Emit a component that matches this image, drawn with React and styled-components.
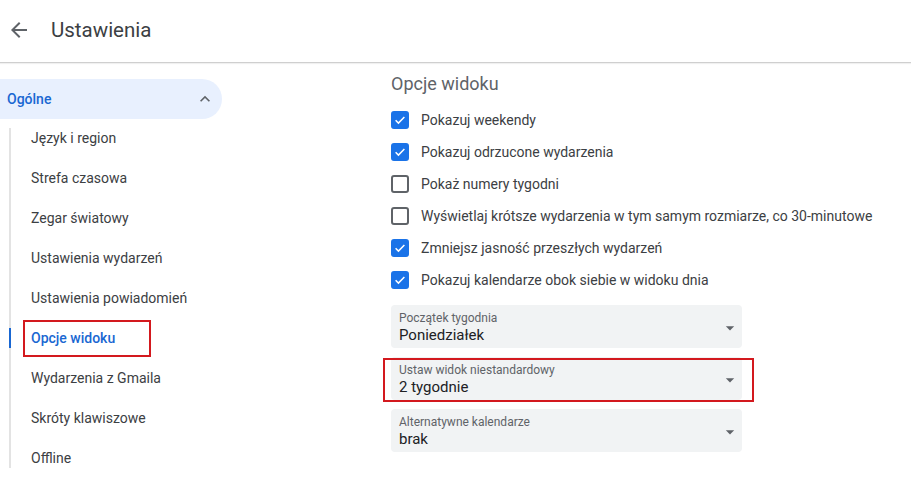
import React from "react";
import styled, { createGlobalStyle } from "styled-components";

const GlobalStyle = createGlobalStyle`
  body {
    margin: 0;
    background: #fff;
    font-family: Roboto, "Liberation Sans", Arial, sans-serif;
    color: #3c4043;
  }
`;

const navItems = [
  "Język i region",
  "Strefa czasowa",
  "Zegar światowy",
  "Ustawienia wydarzeń",
  "Ustawienia powiadomień",
  "Opcje widoku",
  "Wydarzenia z Gmaila",
  "Skróty klawiszowe",
  "Offline",
];

const options = [
  { label: "Pokazuj weekendy", checked: true },
  { label: "Pokazuj odrzucone wydarzenia", checked: true },
  { label: "Pokaż numery tygodni", checked: false },
  {
    label: "Wyświetlaj krótsze wydarzenia w tym samym rozmiarze, co 30-minutowe",
    checked: false,
  },
  { label: "Zmniejsz jasność przeszłych wydarzeń", checked: true },
  { label: "Pokazuj kalendarze obok siebie w widoku dnia", checked: true },
];

const selects = [
  { label: "Początek tygodnia", value: "Poniedziałek" },
  { label: "Ustaw widok niestandardowy", value: "2 tygodnie", marked: true },
  { label: "Alternatywne kalendarze", value: "brak" },
];

function App() {
  return (
    <>
      <GlobalStyle />
      <Page>
        <Header>
          <IconButton aria-label="Wstecz">
            <svg width="24" height="24" viewBox="0 0 24 24">
              <path
                fill="#5f6368"
                d="M20 11H7.83l5.59-5.59L12 4l-8 8 8 8 1.41-1.41L7.83 13H20v-2z"
              />
            </svg>
          </IconButton>
          <Title>Ustawienia</Title>
        </Header>
        <Body>
          <Sidebar>
            <SectionPill>
              <span>Ogólne</span>
              <svg width="20" height="20" viewBox="0 0 24 24">
                <path
                  fill="#5f6368"
                  d="M7.41 15.41L12 10.83l4.59 4.58L18 14l-6-6-6 6z"
                />
              </svg>
            </SectionPill>
            <NavList>
              {navItems.map((item) => {
                const active = item === "Opcje widoku";
                return (
                  <NavItem key={item} $active={active}>
                    <NavLabel $marked={active}>{item}</NavLabel>
                  </NavItem>
                );
              })}
            </NavList>
          </Sidebar>
          <Content>
            <Heading>Opcje widoku</Heading>
            <OptionList>
              {options.map((opt) => (
                <OptionRow key={opt.label}>
                  <Checkbox $checked={opt.checked}>
                    {opt.checked && (
                      <svg width="14" height="14" viewBox="0 0 24 24">
                        <path
                          fill="none"
                          stroke="#fff"
                          strokeWidth="2.6"
                          d="M4.5 12.5l4.8 4.8L19.5 7"
                        />
                      </svg>
                    )}
                  </Checkbox>
                  <OptionLabel>{opt.label}</OptionLabel>
                </OptionRow>
              ))}
            </OptionList>
            <SelectList>
              {selects.map((s) => (
                <SelectWrap key={s.label} $marked={s.marked}>
                  <SelectBox>
                    <SelectText>
                      <SelectLabel>{s.label}</SelectLabel>
                      <SelectValue>{s.value}</SelectValue>
                    </SelectText>
                    <svg width="20" height="20" viewBox="0 0 24 24">
                      <path fill="#5f6368" d="M7 10l5 5 5-5z" />
                    </svg>
                  </SelectBox>
                </SelectWrap>
              ))}
            </SelectList>
          </Content>
        </Body>
      </Page>
    </>
  );
}

const Page = styled.div`
  width: 911px;
  height: 481px;
  overflow: hidden;
`;

const Header = styled.header`
  height: 62px;
  display: flex;
  align-items: center;
  gap: 20px;
  padding-left: 7px;
  border-bottom: 1px solid #cfcfcf;
  box-shadow: 0 1px 1px rgba(0, 0, 0, 0.06);
`;

const IconButton = styled.div`
  width: 24px;
  height: 24px;
  display: flex;
  margin-top: -2px;
`;

const Title = styled.h1`
  margin: 0;
  margin-top: -2px;
  font-size: 20.5px;
  font-weight: 400;
  color: #3c4043;
`;

const Body = styled.div`
  display: grid;
  grid-template-columns: 391px 1fr;
`;

const Sidebar = styled.nav`
  padding-top: 16px;
`;

const SectionPill = styled.div`
  width: 222px;
  height: 40px;
  box-sizing: border-box;
  display: flex;
  align-items: center;
  justify-content: space-between;
  padding: 0 7px 0 7px;
  border-radius: 0 20px 20px 0;
  background: #e8f0fe;
  color: #1967d2;
  font-size: 14px;
  font-weight: 500;
`;

const NavList = styled.div`
  position: relative;
  margin-left: 9px;
  margin-top: -1px;

  &::before {
    content: "";
    position: absolute;
    left: 0;
    top: 10px;
    bottom: 10px;
    width: 2px;
    background: #e3e3e3;
  }
`;

const NavItem = styled.div`
  position: relative;
  height: 40px;
  display: flex;
  align-items: center;
  padding-left: 22px;
  font-size: 14px;
  color: ${(p) => (p.$active ? "#1967d2" : "#3c4043")};
  font-weight: ${(p) => (p.$active ? 500 : 400)};

  &::before {
    content: "";
    display: ${(p) => (p.$active ? "block" : "none")};
    position: absolute;
    left: 0;
    top: 10px;
    width: 2px;
    height: 20px;
    background: #1967d2;
  }
`;

const NavLabel = styled.span`
  ${(p) =>
    p.$marked &&
    `
    margin-left: -8px;
    margin-top: 1px;
    padding: 0 34px 0 6px;
    line-height: 33px;
    border: 2px solid #d3191e;
  `}
`;

const Content = styled.main`
  padding-top: 9px;
`;

const Heading = styled.h2`
  margin: 0;
  height: 24px;
  line-height: 24px;
  font-size: 18px;
  font-weight: 400;
  color: #5f6368;
`;

const OptionList = styled.div`
  margin-top: 8px;
`;

const OptionRow = styled.div`
  height: 32px;
  display: flex;
  align-items: center;
  gap: 12px;
`;

const Checkbox = styled.span`
  width: 18px;
  height: 18px;
  box-sizing: border-box;
  border-radius: 3px;
  display: flex;
  align-items: center;
  justify-content: center;
  background: ${(p) => (p.$checked ? "#1a73e8" : "#fff")};
  border: 2px solid ${(p) => (p.$checked ? "#1a73e8" : "#5f6368")};
`;

const OptionLabel = styled.span`
  font-size: 14px;
  color: #3c4043;
`;

const SelectList = styled.div`
  margin-top: 9px;
  display: flex;
  flex-direction: column;
  gap: 9px;
`;

const SelectWrap = styled.div`
  position: relative;
  width: 351px;

  &::after {
    content: "";
    display: ${(p) => (p.$marked ? "block" : "none")};
    position: absolute;
    left: -8px;
    right: -12px;
    top: 1px;
    bottom: -2px;
    border: 2px solid #d3191e;
    pointer-events: none;
  }
`;

const SelectBox = styled.div`
  height: 43px;
  box-sizing: border-box;
  display: flex;
  align-items: center;
  justify-content: space-between;
  padding: 3px 2px 0 8px;
  border-radius: 4px;
  background: #f1f3f4;
`;

const SelectText = styled.div`
  display: flex;
  flex-direction: column;
`;

const SelectLabel = styled.span`
  font-size: 12px;
  line-height: 15px;
  color: #5f6368;
`;

const SelectValue = styled.span`
  font-size: 15px;
  line-height: 19px;
  color: #202124;
`;

export default App;
